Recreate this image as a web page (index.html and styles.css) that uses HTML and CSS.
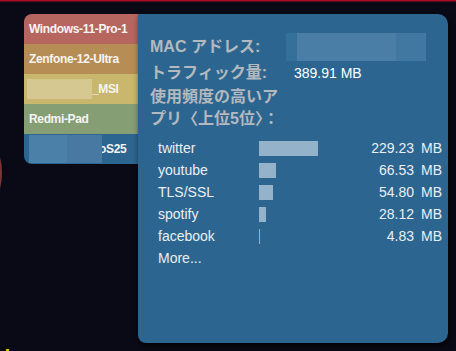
FILE: index.html
```html
<!DOCTYPE html>
<html lang="ja">
<head>
    <meta charset="UTF-8">
    <title>クライアント詳細</title>
    <link rel="stylesheet" href="styles.css">
</head>
<body>
    <div class="top-line"></div>
    <div class="bg-arc"></div>
    <div class="bg-dot"></div>

    <div class="popup">
        <div class="devices">
            <div class="device device-red">Windows-11-Pro-1</div>
            <div class="device device-orange">Zenfone-12-Ultra</div>
            <div class="device device-yellow"><span class="blur blur-yellow"></span>_MSI</div>
            <div class="device device-green">Redmi-Pad</div>
            <div class="device device-blue"><span class="blur blur-blue"></span>oS25</div>
        </div>

        <div class="details">
            <div class="info-row info-mac">
                <div class="info-label">MAC アドレス:</div>
                <div class="info-value"><span class="mac-blur"></span></div>
            </div>
            <div class="info-row info-traffic">
                <div class="info-label">トラフィック量:</div>
                <div class="info-value">389.91 MB</div>
            </div>
            <div class="info-row info-apps">
                <div class="info-label">使用頻度の高いアプリ〈上位5位〉：</div>
            </div>

            <div class="app-list">
                <div class="app-row">
                    <span class="app-name">twitter</span>
                    <span class="app-bar"><span class="app-fill" style="width: 58.8%"></span></span>
                    <span class="app-size">229.23</span>
                    <span class="app-unit">MB</span>
                </div>
                <div class="app-row">
                    <span class="app-name">youtube</span>
                    <span class="app-bar"><span class="app-fill" style="width: 17.1%"></span></span>
                    <span class="app-size">66.53</span>
                    <span class="app-unit">MB</span>
                </div>
                <div class="app-row">
                    <span class="app-name">TLS/SSL</span>
                    <span class="app-bar"><span class="app-fill" style="width: 14.1%"></span></span>
                    <span class="app-size">54.80</span>
                    <span class="app-unit">MB</span>
                </div>
                <div class="app-row">
                    <span class="app-name">spotify</span>
                    <span class="app-bar"><span class="app-fill" style="width: 7.2%"></span></span>
                    <span class="app-size">28.12</span>
                    <span class="app-unit">MB</span>
                </div>
                <div class="app-row">
                    <span class="app-name">facebook</span>
                    <span class="app-bar"><span class="app-fill" style="width: 1.2%"></span></span>
                    <span class="app-size">4.83</span>
                    <span class="app-unit">MB</span>
                </div>
                <div class="app-row">
                    <span class="app-name app-more">More...</span>
                </div>
            </div>
        </div>
    </div>
</body>
</html>
```

FILE: styles.css
```css
:root {
    --page-bg: #0a0a17;
    --panel-bg: #2c6690;
    --label-color: #b3b9bf;
    --text-color: #eaeff4;
    --bar-color: #94b3cb;
}

* {
    box-sizing: border-box;
    margin: 0;
    padding: 0;
}

body {
    font-family: 'Liberation Sans', Arial, 'Noto Sans CJK JP', sans-serif;
    background-color: var(--page-bg);
    width: 456px;
    height: 351px;
    overflow: hidden;
    position: relative;
}

.top-line {
    height: 2px;
    background: linear-gradient(#a50d22 0 1px, #5c0a18 1px);
}

/* bits of the page behind the popup */
.bg-arc {
    position: absolute;
    left: -118px;
    top: 113px;
    width: 120px;
    height: 120px;
    border-radius: 50%;
    border: 2px solid #7a3536;
}

.bg-dot {
    position: absolute;
    left: 6px;
    top: 349px;
    width: 3px;
    height: 2px;
    background: #e8b800;
}

.popup {
    display: flex;
    align-items: flex-start;
    margin: 12px 0 0 24px;
}

/* Device list */
.devices {
    width: 114px;
    border-radius: 8px 0 0 8px;
    overflow: hidden;
}

.device {
    height: 30px;
    padding-left: 5px;
    display: flex;
    align-items: center;
    color: #f5f5f5;
    font-size: 12px;
    font-weight: bold;
    letter-spacing: -0.35px;
    white-space: nowrap;
}

.device-red { background: #b6665e; }
.device-orange { background: #b68e55; }
.device-yellow { background: #c8b76c; }
.device-green { background: #869e74; }
.device-blue { background: var(--panel-bg); }

.blur {
    display: block;
    flex-shrink: 0;
    position: relative;
}

.blur-yellow {
    width: 65px;
    height: 20px;
    margin-left: -2px;
    background: #d5c890;
}

.blur-blue {
    width: 73px;
    height: 28px;
    margin-right: -3px;
    background: linear-gradient(to right, #4b80a8 0 38px, #4779a2 38px);
}

/* Details panel */
.details {
    width: 310px;
    height: 329px;
    background: var(--panel-bg);
    border-radius: 0 10px 10px 8px;
    padding: 19px 12px 0 12px;
    box-shadow: 2px 3px 6px rgba(0, 0, 0, 0.85);
}

.info-row {
    display: grid;
    grid-template-columns: 140px 1fr;
    column-gap: 4px;
    align-items: center;
}

.info-label {
    color: var(--label-color);
    font-size: 16px;
    font-weight: bold;
    line-height: 22px;
}

.info-value {
    color: #ffffff;
    font-size: 14px;
}

.info-mac {
    height: 28px;
}

.mac-blur {
    display: block;
    width: 140px;
    height: 28px;
    margin-left: -8px;
    background: linear-gradient(to right, #34709a 0 11px, #4a7ea7 11px 110px, #4078a2 110px);
}

.info-traffic {
    height: 22px;
    margin-top: 1px;
}

.info-apps {
    margin-top: 2px;
}

.app-list {
    margin-top: 7px;
    padding-left: 8px;
}

.app-row {
    display: grid;
    grid-template-columns: 101px 100px 55px auto;
    align-items: center;
    height: 22px;
    color: var(--text-color);
    font-size: 14px;
}

.app-bar {
    height: 15px;
}

.app-fill {
    display: block;
    height: 100%;
    min-width: 1px;
    background: var(--bar-color);
}

.app-size {
    text-align: right;
}

.app-unit {
    margin-left: 7px;
}

.app-more {
    grid-column: 1 / 3;
}
```
